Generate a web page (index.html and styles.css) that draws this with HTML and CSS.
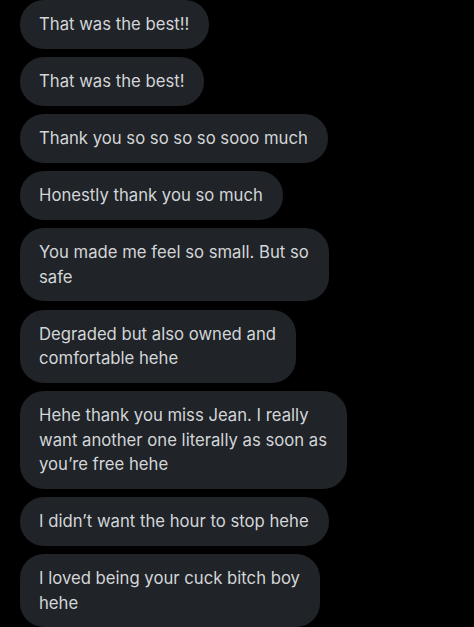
FILE: index.html
```html
<!DOCTYPE html>
<html lang="en">
<head>
    <meta charset="UTF-8">
    <meta name="viewport" content="width=device-width, initial-scale=1.0">
    <title>Messages</title>
    <link rel="stylesheet" href="styles.css">
</head>
<body>
    <div class="thread">
        <div class="bubble">That was the best!!</div>
        <div class="bubble">That was the best!</div>
        <div class="bubble">Thank you so so so so sooo much</div>
        <div class="bubble">Honestly thank you so much</div>
        <div class="bubble">You made me feel so small. But so<br>safe</div>
        <div class="bubble">Degraded but also owned and<br>comfortable hehe</div>
        <div class="bubble">Hehe thank you miss Jean. I really<br>want another one literally as soon as<br>you’re free hehe</div>
        <div class="bubble">I didn’t want the hour to stop hehe</div>
        <div class="bubble">I loved being your cuck bitch boy<br>hehe</div>
    </div>
</body>
</html>
```

FILE: styles.css
```css
body {
    font-family: Inter, "Noto Sans", sans-serif;
    background-color: black;
    color: #d3d6d9;
    margin: 0;
    padding: 0;
    height: 100vh;
    overflow: hidden;
}

.thread {
    display: flex;
    flex-direction: column;
    align-items: flex-start;
    gap: 8.5px;
    padding: 0 20px;
    margin-top: 0;
}

.bubble {
    background-color: #202327;
    border-radius: 24px;
    padding: 12px 20px 12px 19px;
    font-size: 16.7px;
    line-height: 24.5px;
    white-space: nowrap;
}
```
